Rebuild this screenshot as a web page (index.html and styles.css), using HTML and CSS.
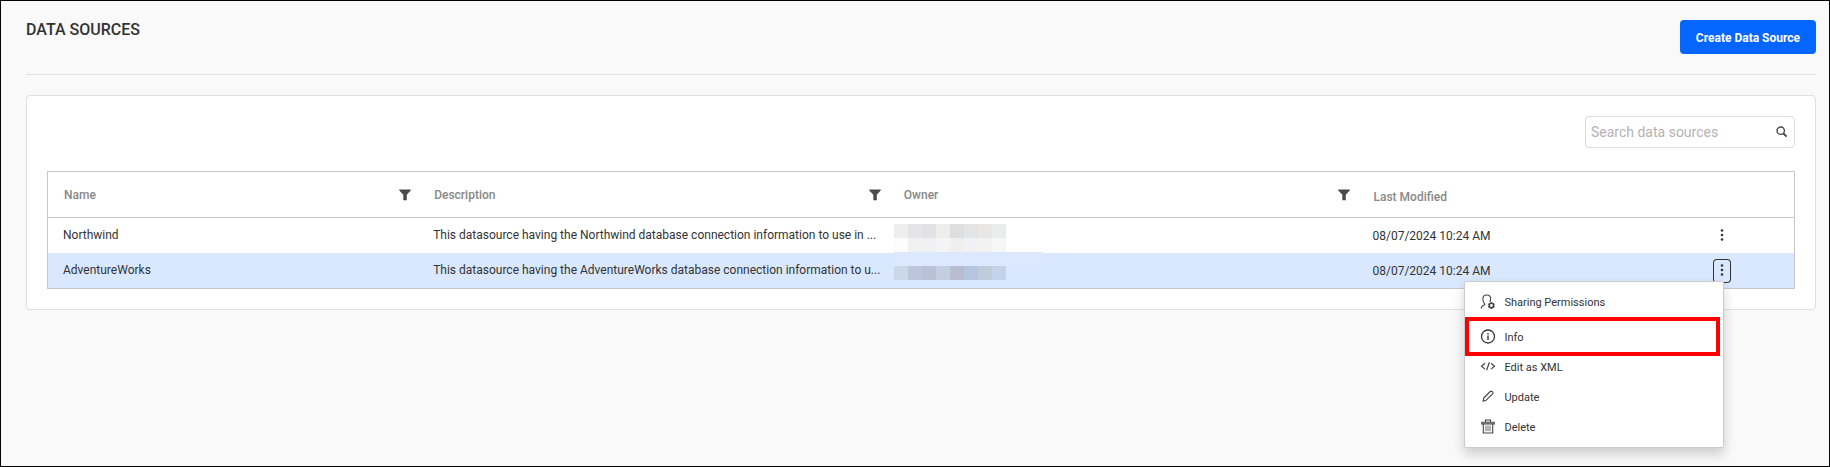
FILE: index.html
```
<!DOCTYPE html>
<html lang="en">
<head>
<meta charset="utf-8">
<title>Data Sources</title>
<link rel="stylesheet" href="styles.css">
</head>
<body>
<svg class="defs" aria-hidden="true">
  <symbol id="funnel" viewBox="0 0 12 12"><path d="M0.3 0.5H11.7V1.5L7.8 5.8V11.3H4.3V5.8L0.3 1.5Z" fill="#4a4a4a"/></symbol>
  <symbol id="dots" viewBox="0 0 4 12"><g fill="#333"><circle cx="2" cy="1.5" r="1.3"/><circle cx="2" cy="6" r="1.3"/><circle cx="2" cy="10.5" r="1.3"/></g></symbol>
</svg>
<main class="page">
  <header class="page-header">
    <h1 class="page-title">DATA SOURCES</h1>
    <button class="create-button" type="button">Create Data Source</button>
  </header>
  <section class="card">
    <form class="search">
      <input class="search-input" type="text" placeholder="Search data sources" aria-label="Search data sources">
      <svg class="search-icon" viewBox="0 0 12 12" fill="none" stroke="#444"><circle cx="4.7" cy="4.7" r="3.7" stroke-width="1.3"/><path d="M7.5 7.5L10.6 10.7" stroke-width="1.8"/></svg>
    </form>
    <table class="grid">
      <colgroup><col class="col-name"><col class="col-text"><col class="col-text"><col><col class="col-actions"></colgroup>
      <thead>
        <tr>
          <th><div class="head">Name <button class="filter" type="button" aria-label="Filter name"><svg><use href="#funnel"/></svg></button></div></th>
          <th><div class="head">Description <button class="filter" type="button" aria-label="Filter description"><svg><use href="#funnel"/></svg></button></div></th>
          <th><div class="head">Owner <button class="filter" type="button" aria-label="Filter owner"><svg><use href="#funnel"/></svg></button></div></th>
          <th class="plain">Last Modified</th>
          <th></th>
        </tr>
      </thead>
      <tbody>
        <tr>
          <td>Northwind</td>
          <td><div class="clip">This datasource having the Northwind database connection information to use in ...</div></td>
          <td class="owner">
            <svg class="redaction" viewBox="0 0 149 56" shape-rendering="crispEdges" aria-hidden="true">
              <path fill="#eeeeec" d="M0 0h14v14H0z"/><path fill="#e5e5e7" d="M14 0h14v14H14z"/><path fill="#e1e2e5" d="M28 0h14v14H28z"/><path fill="#ededeb" d="M42 0h14v14H42z"/><path fill="#dedede" d="M56 0h14v14H56z"/><path fill="#e3e4e6" d="M70 0h14v14H70z"/><path fill="#e9e7e6" d="M84 0h14v14H84z"/><path fill="#e9edee" d="M98 0h14v14H98z"/>
              <path fill="#fcfcfc" d="M0 14h14v14H0z"/><path fill="#f1f1f2" d="M14 14h14v14H14z"/><path fill="#eff0f3" d="M28 14h14v14H28z"/><path fill="#f4f4f4" d="M42 14h14v14H42z"/><path fill="#f1efed" d="M56 14h14v14H56z"/><path fill="#eff1f4" d="M70 14h14v14H70z"/><path fill="#f2f2f3" d="M84 14h14v14H84z"/><path fill="#f5f7f7" d="M98 14h14v14H98z"/>
              <path fill="#dce8ff" d="M0 28h149v14H0z"/>
              <path fill="#cad8e9" d="M0 42h14v14H0z"/><path fill="#bcc6da" d="M14 42h14v14H14z"/><path fill="#b7c2d8" d="M28 42h14v14H28z"/><path fill="#c4cee1" d="M42 42h14v14H42z"/><path fill="#b9bdd1" d="M56 42h14v14H56z"/><path fill="#b6c5df" d="M70 42h14v14H70z"/><path fill="#bfcadb" d="M84 42h14v14H84z"/><path fill="#c4d2ea" d="M98 42h14v14H98z"/>
            </svg>
          </td>
          <td class="date">08/07/2024 10:24 AM</td>
          <td class="actions"><div class="action"><button class="dots" type="button" aria-label="Northwind actions"><svg><use href="#dots"/></svg></button></div></td>
        </tr>
        <tr class="selected">
          <td>AdventureWorks</td>
          <td><div class="clip">This datasource having the AdventureWorks database connection information to u...</div></td>
          <td></td>
          <td class="date">08/07/2024 10:24 AM</td>
          <td class="actions">
            <div class="action">
              <button class="dots open" type="button" aria-label="AdventureWorks actions" aria-expanded="true"><svg><use href="#dots"/></svg></button>
              <div class="menu" role="menu">
                <button class="item" type="button" role="menuitem">
                  <svg viewBox="0 0 16 16" fill="none" stroke="#444"><path d="M1.2 14.5C1.3 12.5 2.2 11.6 4.7 10.8C4.9 10.2 4.6 9.7 4 8.9C3 7.6 2.8 6.3 2.9 4.6C3 2 4.6 1 6.7 1S10.5 2 10.6 4.6C10.7 6 10.4 7 9.7 7.9" stroke-width="1.1"/><circle cx="11.4" cy="11.5" r="2.2" stroke-width="1.5"/><path d="M11.4 8V9.3M11.4 13.7V15M8.3 9.8L9.4 10.4M13.4 12.6L14.5 13.2M8.3 13.2L9.4 12.6M13.4 10.4L14.5 9.8" stroke-width="1.5"/></svg>
                  Sharing Permissions</button>
                <hr class="separator">
                <button class="item highlighted" type="button" role="menuitem">
                  <svg viewBox="0 0 16 16" fill="none" stroke="#333"><circle cx="8" cy="7.5" r="6.5" stroke-width="1.3"/><path d="M8 6.5V11" stroke-width="1.4"/><path d="M8 4V5.4" stroke-width="1.4"/></svg>
                  Info</button>
                <button class="item" type="button" role="menuitem">
                  <svg viewBox="0 0 16 16" fill="none" stroke="#444" stroke-width="1.2"><path d="M5 4.3L1.5 7.2L5 10.1M11 4.3L14.5 7.2L11 10.1M9.4 3.2L6.6 11.2"/></svg>
                  Edit as XML</button>
                <button class="item" type="button" role="menuitem">
                  <svg viewBox="0 0 16 16" fill="none" stroke="#444" stroke-width="1.1" stroke-linejoin="round"><path d="M3 12.3L3.8 9L10.2 2.5C10.8 2 11.6 2 12.2 2.5L12.6 2.9C13.1 3.5 13.1 4.2 12.6 4.8L6.2 11.2Z"/></svg>
                  Update</button>
                <button class="item" type="button" role="menuitem">
                  <svg viewBox="0 0 16 16" fill="none" stroke="#444" stroke-width="1.1"><path d="M5.5 3V1H10.5V3M1.8 3.2H14.2V4.9H1.8ZM3.3 5V14H12.7V5"/><path d="M6 6.5V12.3M8 6.5V12.3M10 6.5V12.3" stroke="#777"/></svg>
                  Delete</button>
              </div>
            </div>
          </td>
        </tr>
      </tbody>
    </table>
  </section>
</main>
</body>
</html>
```
FILE: styles.css
```
* { box-sizing: border-box; }
body {
  margin: 0;
  font-family: Roboto, "Liberation Sans", sans-serif;
  font-size: 12px;
  color: #333;
}
button { font: inherit; color: inherit; background: none; border: 0; padding: 0; }
.defs { display: none; }
.page {
  min-height: 100vh;
  padding: 19px 13px 19px 25px;
  border: 1px solid #000;
  background: #f9f9f9;
}
.page-header {
  display: flex;
  align-items: flex-start;
  justify-content: space-between;
  padding-bottom: 20px;
  border-bottom: 1px solid #e0e0e0;
}
.page-title { margin: 0; font-size: 16px; line-height: 19px; font-weight: 500; }
.create-button {
  height: 34px;
  padding: 2px 16px 0;
  border-radius: 4px;
  background: #0565ff;
  color: #fff;
  font-weight: 700;
}
.card {
  margin-top: 20px;
  padding: 20px;
  border: 1px solid #e0e0e0;
  border-radius: 4px;
  background: #fff;
}
.search {
  display: flex;
  align-items: center;
  width: 210px;
  height: 32px;
  margin: 0 0 23px auto;
  padding: 0 6px 0 5px;
  border: 1px solid #dcdcdc;
  border-radius: 4px;
}
.search-input {
  flex: 1;
  min-width: 0;
  padding: 0;
  border: 0;
  outline: 0;
  background: none;
  font: inherit;
  font-size: 14px;
}
.search-input::placeholder { color: #b3b3b3; }
.search-icon { width: 12px; height: 12px; }
.grid {
  width: 100%;
  table-layout: fixed;
  border: 1px solid #c8c8c8;
  border-spacing: 0;
}
.col-name { width: 21.2%; }
.col-text { width: 26.9%; }
.col-actions { width: 8.2%; }
th {
  height: 46px;
  padding: 0 7px 0 16px;
  border-bottom: 1px solid #c8c8c8;
  text-align: left;
  font-weight: 500;
  color: #888;
}
th.plain { padding-top: 4px; }
.head { display: flex; align-items: center; justify-content: space-between; }
.filter, .filter svg { display: block; width: 12px; height: 12px; }
td { height: 35px; padding: 0 4px 2px 15px; }
td.date { padding-bottom: 0; }
.selected td { background: #d9e8ff; }
.clip { overflow: hidden; text-overflow: ellipsis; white-space: nowrap; }
.owner { position: relative; }
.redaction { position: absolute; z-index: 1; top: 6px; left: 6px; width: 149px; height: 56px; }
td.actions { padding: 0; }
.action { position: relative; width: 18px; margin: 0 auto; }
.dots {
  display: flex;
  align-items: center;
  justify-content: center;
  width: 18px;
  height: 24px;
  padding-bottom: 2px;
  border-radius: 4px;
}
.dots svg { width: 4px; height: 12px; }
.dots.open { box-shadow: inset 0 0 0 1px #333; }
.menu {
  position: absolute;
  z-index: 2;
  top: 22px;
  right: 7px;
  width: 260px;
  padding: 5px 0;
  border: 1px solid #ccc;
  border-radius: 2px;
  background: #fff;
  font-size: 11px;
  box-shadow: 0 6px 12px rgba(0, 0, 0, 0.18);
}
.item {
  position: relative;
  display: flex;
  align-items: center;
  gap: 8px;
  width: 100%;
  height: 30px;
  padding: 2px 0 0 15px;
  text-align: left;
}
.item svg { width: 16px; height: 16px; margin-bottom: 2px; }
.separator { margin: 2px 0; border: 0; border-top: 1px solid #e0e0e0; }
.highlighted::after {
  content: "";
  position: absolute;
  top: -5px;
  right: 3px;
  bottom: -4px;
  left: 0;
  border: 4px solid #f00;
}
```
